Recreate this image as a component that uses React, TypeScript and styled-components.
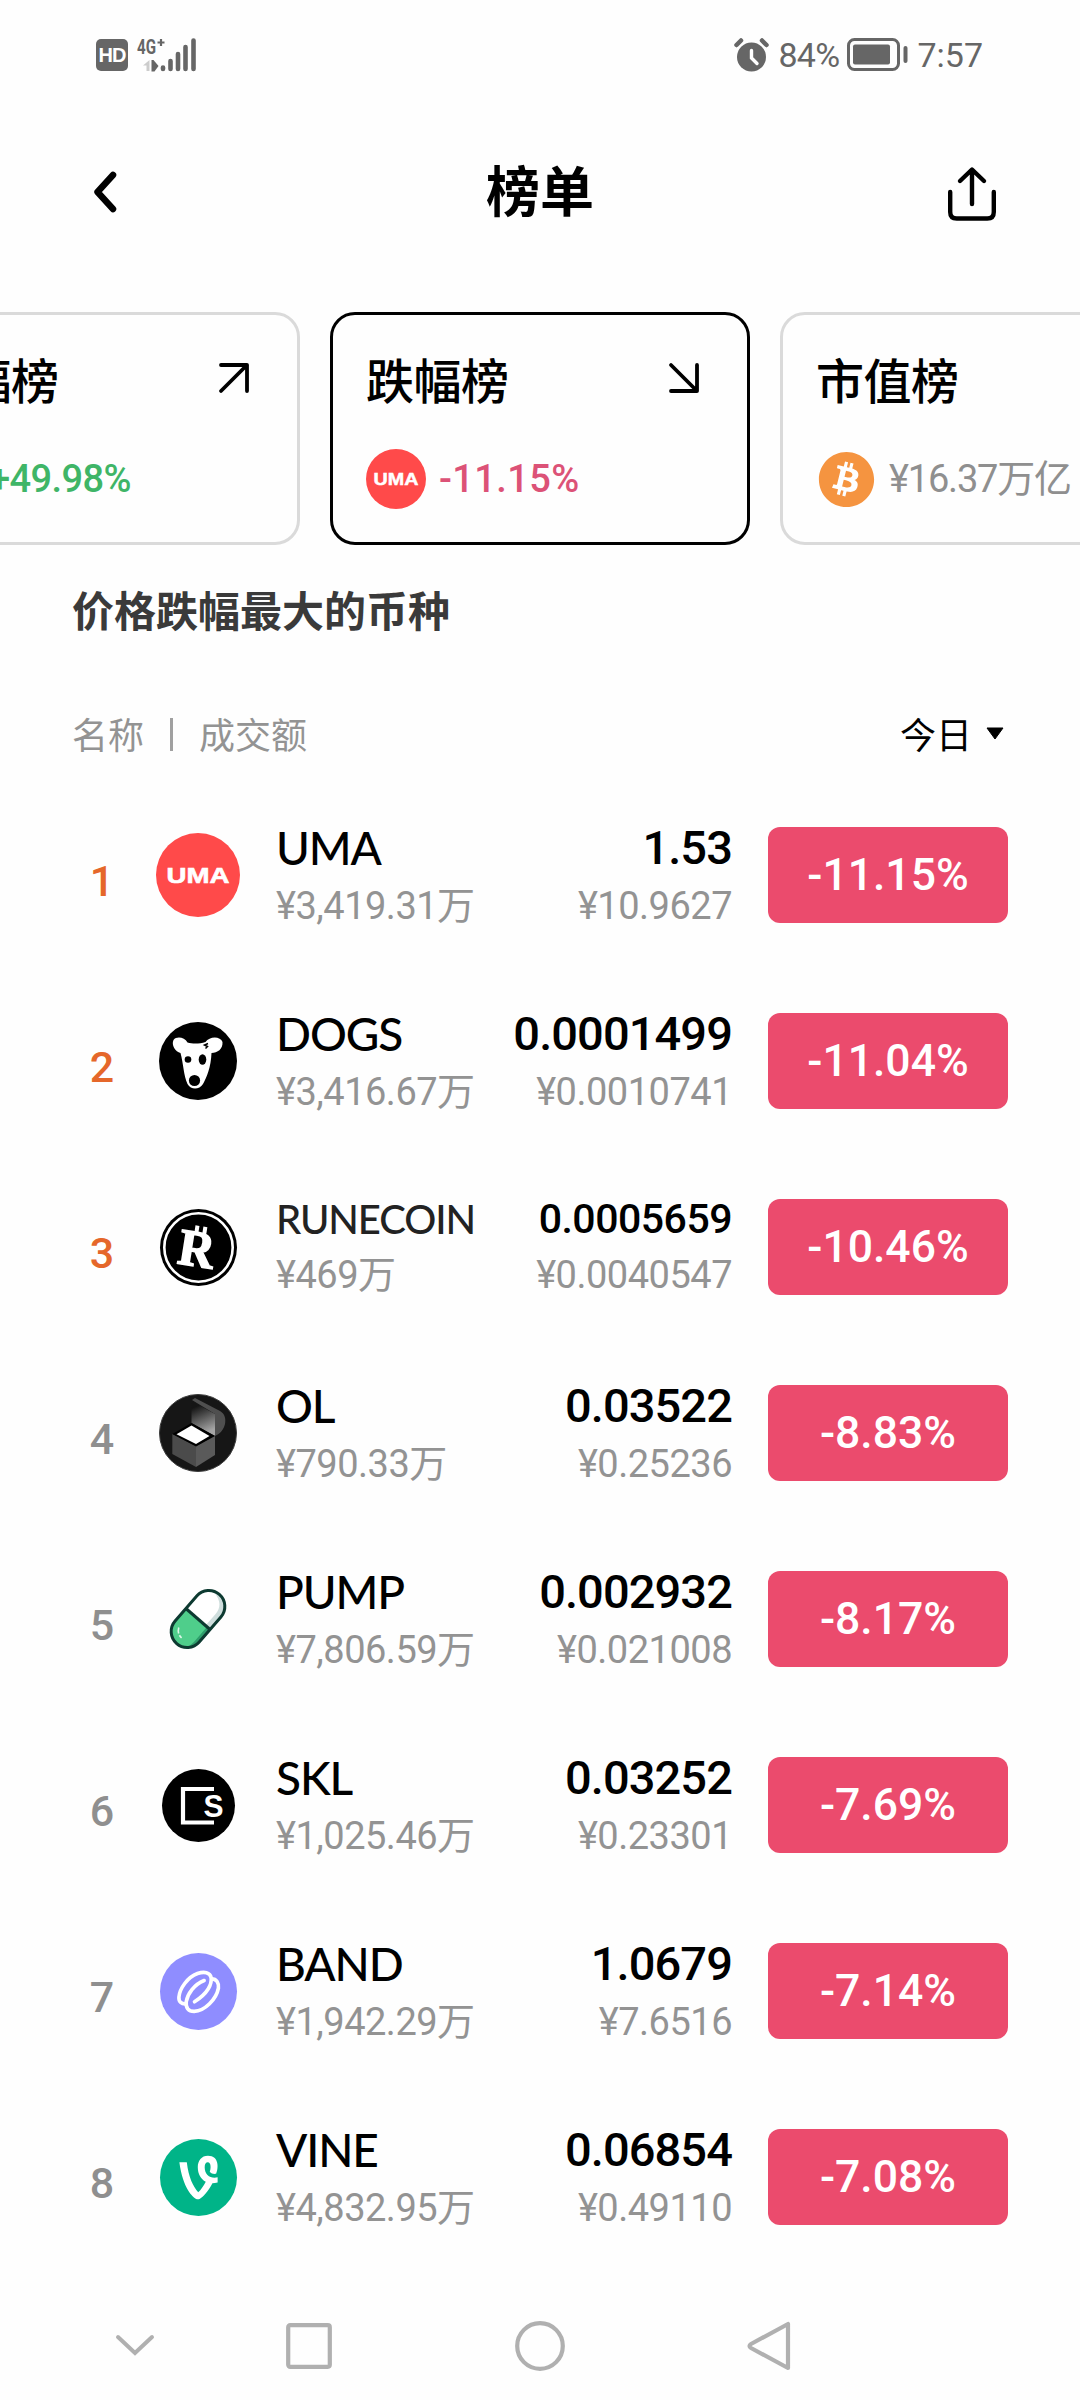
import React from 'react';
import styled, { createGlobalStyle } from 'styled-components';
import { FaBitcoin, FaVine } from 'react-icons/fa';

interface Coin {
  rank: number;
  symbol: string;
  volume: string;
  price: string;
  cny: string;
  change: string;
  icon: React.ReactNode;
  compact?: boolean;
}

const UmaIcon = ({ size = 84 }: { size?: number }) => (
  <svg width={size} height={size} viewBox="0 0 84 84">
    <circle cx="42" cy="42" r="42" fill="#ff4a4a" />
    <text
      x="10.5"
      y="50"
      fill="#fff"
      stroke="#fff"
      strokeWidth="0.6"
      fontFamily="Liberation Sans, sans-serif"
      fontWeight="700"
      fontSize="22"
      textLength="63"
      lengthAdjust="spacingAndGlyphs"
    >
      UMA
    </text>
  </svg>
);

const DogsIcon = () => (
  <svg width="78" height="78" viewBox="0 0 78 78">
    <circle cx="39" cy="39" r="39" fill="#000" />
    <path
      d="M14.5 18c3-4 11-3 14 2.5 5 1.5 12 1.5 18-.5 4-6 15-6 17 0 .5 7-5 11-11 11-.5 14-5 25-8.500 31-4 6-12 6-15.500 0-4-9-4-20-7-31-5-1-9.500-8-7-13z"
      fill="#fff"
    />
    <circle cx="29" cy="37.5" r="3.3" />
    <ellipse cx="43.5" cy="37.5" rx="3.8" ry="5.2" />
    <circle cx="35.5" cy="58.5" r="5.6" />
    <path d="M49 21.5l-3.500 1.500 3 1.500-2 2" fill="none" stroke="#000" strokeWidth="1.5" />
  </svg>
);

const RuneIcon = () => (
  <svg width="77" height="77" viewBox="0 0 77 77">
    <circle cx="38.5" cy="38.5" r="38.5" fill="#000" />
    <circle cx="38.5" cy="38.5" r="34.2" fill="none" stroke="#fff" strokeWidth="2.6" />
    <g transform="rotate(9 38 39)" fill="#fff">
      <rect x="32" y="17" width="4" height="9" />
      <rect x="40" y="17" width="4" height="9" />
      <text
        x="19"
        y="57.5"
        stroke="#fff"
        strokeWidth="1.5"
        fontFamily="Liberation Serif, serif"
        fontWeight="700"
        fontSize="52"
        textLength="36"
        lengthAdjust="spacingAndGlyphs"
      >
        R
      </text>
    </g>
  </svg>
);

const OlIcon = () => (
  <svg width="78" height="78" viewBox="0 0 78 78">
    <defs>
      <linearGradient id="lid" x1="0" y1="0" x2="0.3" y2="1">
        <stop offset="0.2" stopColor="#151515" />
        <stop offset="1" stopColor="#a5a5a5" />
      </linearGradient>
    </defs>
    <circle cx="39" cy="39" r="38.5" fill="#161616" stroke="#3c3c3c" />
    <path d="M33 6l3-2 25 13c5 3 6 8 5 13s-5 10-10 12V20z" fill="#4f4f4f" />
    <path d="M32.5 7L56 20v22L32.5 29z" fill="url(#lid)" />
    <path d="M13.3 40L37 52v21L13.3 60z" fill="#4b4b4b" />
    <path d="M37 52l19-10.500V61L37 73z" fill="#5a5a5a" />
    <path d="M32.5 29L56 42 37 52.5 13.3 40z" fill="#000" />
    <path d="M32.5 31.5L50.5 42 37 50 17.5 40.3z" fill="#fff" />
  </svg>
);

const PumpIcon = () => (
  <svg width="78" height="78" viewBox="-39 -39 78 78">
    <g transform="rotate(-49)">
      <path d="M0-16h17a16 16 0 0 1 0 32H0z" fill="#fff" />
      <path d="M0 16h17a16 16 0 0 0 14-22C29 6 23 10 15 10H0z" fill="#cfdedd" />
      <path d="M0-16h-17a16 16 0 0 0 0 32H0z" fill="#4fce8b" />
      <path d="M0 16h-17a16 16 0 0 1-12-6c4 2 8 2 12 2H0z" fill="#2f9e6c" />
      <rect x="-32.5" y="-16" width="65" height="32" rx="16" fill="none" stroke="#0d3a31" strokeWidth="3" />
      <path d="M0-16v32" stroke="#0d3a31" strokeWidth="3" />
      <path d="M-19-9c-4 2-6 5-6 9" fill="none" stroke="#dff7ea" strokeWidth="1.6" strokeDasharray="6 2" />
    </g>
  </svg>
);

const SklIcon = () => (
  <svg width="73" height="73" viewBox="0 0 73 73">
    <circle cx="36.5" cy="36.5" r="36.5" fill="#000" />
    <path d="M52 20H21v33.500h31" fill="none" stroke="#fff" strokeWidth="4.2" />
    <text
      x="41.5"
      y="48"
      fill="#fff"
      fontFamily="Liberation Sans, sans-serif"
      fontWeight="700"
      fontSize="32"
      textLength="20"
      lengthAdjust="spacingAndGlyphs"
    >
      S
    </text>
  </svg>
);

const BandIcon = () => (
  <svg width="77" height="77" viewBox="15 16 232 232">
    <circle cx="131" cy="132" r="116" fill="#8f8dff" />
    <g fill="none" stroke="#fff" strokeWidth="11" strokeLinecap="round" strokeLinejoin="round">
      <path d="M94 169c-14 2-23-6-22-20 2-26 26-60 56-71 20-7 38-4 41 12 3 20-10 48-50 73" />
      <path d="M148 99c-30 12-50 40-54 64-2 18 6 29 24 29 32-1 67-37 73-70 2-16-6-28-20-28" />
    </g>
  </svg>
);

const VineIcon = () => (
  <VineCircle>
    <FaVine />
  </VineCircle>
);

const coins: Coin[] = [
  { rank: 1, symbol: 'UMA', volume: '¥3,419.31万', price: '1.53', cny: '¥10.9627', change: '-11.15%', icon: <UmaIcon /> },
  { rank: 2, symbol: 'DOGS', volume: '¥3,416.67万', price: '0.0001499', cny: '¥0.0010741', change: '-11.04%', icon: <DogsIcon /> },
  { rank: 3, symbol: 'RUNECOIN', volume: '¥469万', price: '0.0005659', cny: '¥0.0040547', change: '-10.46%', icon: <RuneIcon />, compact: true },
  { rank: 4, symbol: 'OL', volume: '¥790.33万', price: '0.03522', cny: '¥0.25236', change: '-8.83%', icon: <OlIcon /> },
  { rank: 5, symbol: 'PUMP', volume: '¥7,806.59万', price: '0.002932', cny: '¥0.021008', change: '-8.17%', icon: <PumpIcon /> },
  { rank: 6, symbol: 'SKL', volume: '¥1,025.46万', price: '0.03252', cny: '¥0.23301', change: '-7.69%', icon: <SklIcon /> },
  { rank: 7, symbol: 'BAND', volume: '¥1,942.29万', price: '1.0679', cny: '¥7.6516', change: '-7.14%', icon: <BandIcon /> },
  { rank: 8, symbol: 'VINE', volume: '¥4,832.95万', price: '0.06854', cny: '¥0.49110', change: '-7.08%', icon: <VineIcon /> },
];

const App: React.FC = () => {
  return (
    <>
      <GlobalStyle />
      <Screen>
        <StatusBar>
          <StatusLeft>
            <HdBadge>HD</HdBadge>
            <svg width="60" height="36" viewBox="0 0 60 36">
              <text x="0" y="16.5" fill="#666" fontFamily="Roboto, sans-serif" fontWeight="700" fontSize="21" textLength="19" lengthAdjust="spacingAndGlyphs">
                4G
              </text>
              <path d="M20.5 5.5h7M24 2v7" stroke="#666" strokeWidth="2.2" />
              <path d="M12.5 23v11h-3v-5.500H6z" fill="#ccc" />
              <path d="M14.5 23h2l5 6-4 5.500h-3z" fill="#666" />
              <g stroke="#666" strokeWidth="4.6" strokeLinecap="round">
                <path d="M26 30.5v1.500M33.500 24v8M41 17v15M48.500 10v22M56.500 3.500v28.500" />
              </g>
            </svg>
          </StatusLeft>
          <StatusRight>
            <svg width="35" height="34" viewBox="0 0 35 34">
              <circle cx="17.5" cy="19" r="14.5" fill="#666" />
              <path d="M2.5 7l4.500-4.500M32.500 7L28 2.500" stroke="#666" strokeWidth="4.5" strokeLinecap="round" />
              <path d="M17.5 12.5v7.500l5.500 5.500" fill="none" stroke="#fff" strokeWidth="3.4" strokeLinecap="round" />
            </svg>
            <Battery>84%</Battery>
            <svg width="61" height="33" viewBox="0 0 61 33">
              <rect x="1.5" y="1.5" width="50" height="30" rx="6" fill="none" stroke="#666" strokeWidth="3" />
              <rect x="6" y="6.5" width="37" height="20" rx="2" fill="#666" />
              <rect x="56.5" y="8" width="4" height="17" rx="2" fill="#666" />
            </svg>
            <Clock>7:57</Clock>
          </StatusRight>
        </StatusBar>

        <Header>
          <BackButton aria-label="返回">
            <svg width="24" height="42" viewBox="0 0 24 42">
              <path d="M20 4L4.500 21 20 38" fill="none" stroke="#000" strokeWidth="6.5" strokeLinecap="round" strokeLinejoin="round" />
            </svg>
          </BackButton>
          <Title>榜单</Title>
          <ShareButton aria-label="分享">
            <svg width="48" height="55" viewBox="0 0 48 55">
              <g fill="none" stroke="#000" strokeWidth="4.4" strokeLinecap="round" strokeLinejoin="round">
                <path d="M2.2 25v20c0 4.500 2 6.500 6.500 6.500h30.600c4.500 0 6.500-2 6.500-6.500V25" />
                <path d="M24 37V3M12 14L24 2.500 36 14" />
              </g>
            </svg>
          </ShareButton>
        </Header>

        <CardStrip>
          <BoardCard>
            <CardTop>
              <CardTitle>涨幅榜</CardTitle>
              <svg width="30" height="30" viewBox="0 0 30 30">
                <path d="M2 2h26v26M28 2L2 28" fill="none" stroke="#000" strokeWidth="3.8" strokeLinecap="round" strokeLinejoin="round" />
              </svg>
            </CardTop>
            <CardBottom>
              <CoinSlot />
              <CardValue $color="#3fb567" $spacing={-0.6}>+49.98%</CardValue>
            </CardBottom>
          </BoardCard>
          <BoardCard $active>
            <CardTop>
              <CardTitle>跌幅榜</CardTitle>
              <svg width="30" height="30" viewBox="0 0 30 30">
                <path d="M28 2v26H2M2 2l26 26" fill="none" stroke="#000" strokeWidth="3.8" strokeLinecap="round" strokeLinejoin="round" />
              </svg>
            </CardTop>
            <CardBottom>
              <CoinSlot>
                <UmaIcon size={60} />
              </CoinSlot>
              <CardValue $color="#dc5277" $spacing={0.4}>-11.15%</CardValue>
            </CardBottom>
          </BoardCard>
          <BoardCard>
            <CardTop>
              <CardTitle>市值榜</CardTitle>
            </CardTop>
            <CardBottom>
              <CoinSlot>
                <FaBitcoin size={57} color="#f59440" />
              </CoinSlot>
              <CardValue $color="#8f8f8f" $spacing={-1.2} $light>¥16.37万亿</CardValue>
            </CardBottom>
          </BoardCard>
        </CardStrip>

        <Heading>价格跌幅最大的币种</Heading>

        <ListHeader>
          <Columns>
            名称
            <Divider />
            成交额
          </Columns>
          <Period>
            今日
            <svg width="18" height="13" viewBox="0 0 18 13">
              <path d="M1 1h16L9 12z" fill="#000" stroke="#000" strokeLinejoin="round" />
            </svg>
          </Period>
        </ListHeader>

        <CoinList>
          {coins.map(coin => (
            <CoinRow key={coin.rank}>
              <Rank $top={coin.rank <= 3}>{coin.rank}</Rank>
              <IconCell>{coin.icon}</IconCell>
              <Info $compact={coin.compact}>
                <Symbol $compact={coin.compact}>{coin.symbol}</Symbol>
                <Sub>{coin.volume}</Sub>
              </Info>
              <Info $compact={coin.compact} $right>
                <Price $compact={coin.compact}>{coin.price}</Price>
                <Sub>{coin.cny}</Sub>
              </Info>
              <Change>{coin.change}</Change>
            </CoinRow>
          ))}
        </CoinList>

        <NavBar>
          <svg width="40" height="24" viewBox="0 0 40 24">
            <path d="M3 3l17 16L37 3" fill="none" stroke="#b0b0b0" strokeWidth="4" strokeLinecap="round" />
          </svg>
          <svg width="46" height="46" viewBox="0 0 46 46">
            <rect x="2.2" y="2.2" width="41.6" height="41.6" rx="2" fill="none" stroke="#b0b0b0" strokeWidth="4.2" />
          </svg>
          <svg width="50" height="50" viewBox="0 0 50 50">
            <circle cx="25" cy="25" r="22.8" fill="none" stroke="#b0b0b0" strokeWidth="4.2" />
          </svg>
          <svg width="44" height="50" viewBox="0 0 44 50">
            <path d="M41 3v44L4 27c-2-1.200-2-2.800 0-4z" fill="none" stroke="#b0b0b0" strokeWidth="4.2" strokeLinejoin="round" />
          </svg>
        </NavBar>
      </Screen>
    </>
  );
};

const GlobalStyle = createGlobalStyle`
  * {
    box-sizing: border-box;
  }

  body {
    margin: 0;
    background: #fefefe;
  }

  svg {
    display: block;
    flex-shrink: 0;
    overflow: visible;
  }
`;

const Screen = styled.div`
  width: 1080px;
  height: 2400px;
  overflow: hidden;
  background: #fefefe;
  color: #000;
  font-family: Roboto, 'Noto Sans CJK SC', sans-serif;
`;

const StatusBar = styled.div`
  display: flex;
  justify-content: space-between;
  align-items: center;
  height: 109px;
  padding: 0 97px 0 96px;
  color: #666;
`;

const StatusLeft = styled.div`
  display: flex;
  align-items: center;
  gap: 9px;
`;

const HdBadge = styled.span`
  width: 32px;
  height: 32px;
  border-radius: 5px;
  background: #666;
  color: #fff;
  font-family: 'Liberation Sans', sans-serif;
  font-size: 20px;
  font-weight: 700;
  line-height: 33px;
  letter-spacing: -1px;
  text-align: center;
`;

const StatusRight = styled.div`
  display: flex;
  align-items: center;
  font-size: 34px;
  line-height: 34px;
`;

const Battery = styled.span`
  width: 69px;
  margin-left: 9px;
  letter-spacing: -0.7px;
`;

const Clock = styled.span`
  margin-left: 9px;
`;

const Header = styled.header`
  display: grid;
  grid-template-columns: 1fr auto 1fr;
  align-items: center;
  height: 166px;
  padding: 0 84px;
`;

const IconButton = styled.button`
  padding: 0;
  border: 0;
  background: none;
`;

const BackButton = styled(IconButton)`
  justify-self: start;
  margin-left: 9px;
`;

const ShareButton = styled(IconButton)`
  justify-self: end;
  margin-top: 4px;
`;

const Title = styled.h1`
  margin: 0;
  padding-bottom: 6px;
  font-family: 'Noto Sans CJK SC', sans-serif;
  font-size: 54px;
  font-weight: 700;
  line-height: 70px;
`;

const CardStrip = styled.div`
  display: flex;
  gap: 30px;
  margin: 37px 0 0 -120px;
`;

const BoardCard = styled.div<{ $active?: boolean }>`
  flex: 0 0 420px;
  height: 233px;
  padding: 33px 48px 0 33px;
  border: 3px solid ${props => (props.$active ? '#000' : '#dadada')};
  border-radius: 25px;
`;

const CardTop = styled.div`
  display: flex;
  justify-content: space-between;
  align-items: center;
`;

const CardTitle = styled.div`
  font-family: 'Noto Sans CJK SC', sans-serif;
  font-size: 48px;
  font-weight: 500;
  line-height: 60px;
  letter-spacing: -0.5px;
`;

const CardBottom = styled.div`
  display: flex;
  align-items: center;
  gap: 13px;
  margin-top: 41px;
`;

const CoinSlot = styled.div`
  display: flex;
  justify-content: center;
  align-items: center;
  width: 60px;
  height: 60px;
`;

const CardValue = styled.span<{ $color: string; $spacing: number; $light?: boolean }>`
  color: ${props => props.$color};
  font-size: 38px;
  font-weight: ${props => (props.$light ? 400 : 500)};
  line-height: 60px;
  letter-spacing: ${props => props.$spacing}px;
  white-space: nowrap;
`;

const Heading = styled.h2`
  margin: 34px 0 0 72px;
  color: #3a3a3a;
  font-family: 'Noto Sans CJK SC', sans-serif;
  font-size: 42px;
  font-weight: 700;
  line-height: 60px;
`;

const ListHeader = styled.div`
  display: flex;
  justify-content: space-between;
  align-items: center;
  margin-top: 69px;
  padding: 0 76px 0 72px;
  font-family: 'Noto Sans CJK SC', sans-serif;
  font-size: 36px;
  line-height: 50px;
`;

const Columns = styled.div`
  display: flex;
  align-items: center;
  color: #939393;
`;

const Divider = styled.span`
  width: 3px;
  height: 33px;
  margin: 3px 26px 0;
  background: #a0a0a0;
`;

const Period = styled.div`
  display: flex;
  align-items: center;
  gap: 14px;
`;

const CoinList = styled.div`
  margin-top: 24px;
`;

const CoinRow = styled.div`
  display: grid;
  grid-template-columns: 60px 84px 200px 1fr 240px;
  align-items: center;
  height: 186px;
  padding: 0 72px;
  column-gap: 24px;
`;

const Rank = styled.span<{ $top: boolean }>`
  padding-top: 11px;
  color: ${props => (props.$top ? '#e5672a' : '#8f8f8f')};
  font-size: 43px;
  font-weight: 500;
  line-height: 50px;
  text-align: center;
`;

const IconCell = styled.div`
  display: flex;
  justify-content: center;
`;

const VineCircle = styled.div`
  display: flex;
  justify-content: center;
  align-items: center;
  width: 77px;
  height: 77px;
  border-radius: 50%;
  background: #00b488;
  color: #fff;
  font-size: 51px;
`;

const Info = styled.div<{ $compact?: boolean; $right?: boolean }>`
  display: flex;
  flex-direction: column;
  align-items: ${props => (props.$right ? 'flex-end' : 'flex-start')};
  padding-top: ${props => (props.$compact ? 0 : 4)}px;
  padding-left: ${props => (props.$right ? 0 : 12)}px;
  padding-right: ${props => (props.$right ? 12 : 0)}px;
  line-height: ${props => (props.$compact ? 56 : 59)}px;
  white-space: nowrap;
`;

const Symbol = styled.span<{ $compact?: boolean }>`
  color: ${props => (props.$compact ? '#222' : '#000')};
  font-family: Lato, sans-serif;
  font-size: ${props => (props.$compact ? 40 : 46)}px;
  font-weight: 500;
  letter-spacing: -1.1px;
`;

const Price = styled.span<{ $compact?: boolean }>`
  font-size: ${props => (props.$compact ? 41 : 47)}px;
  font-weight: 500;
  letter-spacing: ${props => (props.$compact ? -0.5 : -0.9)}px;
`;

const Sub = styled.span`
  color: #939393;
  font-size: 38px;
  letter-spacing: -0.5px;
`;

const Change = styled.div`
  height: 96px;
  border-radius: 12px;
  background: #eb4b6d;
  color: #fff;
  font-size: 44.5px;
  font-weight: 500;
  line-height: 97px;
  text-align: center;
`;

const NavBar = styled.nav`
  display: grid;
  grid-template-columns: 174px 174px 288px 169px;
  justify-items: center;
  align-items: center;
  height: 108px;
  margin-top: 22px;
  padding-left: 48px;
`;

export default App;
